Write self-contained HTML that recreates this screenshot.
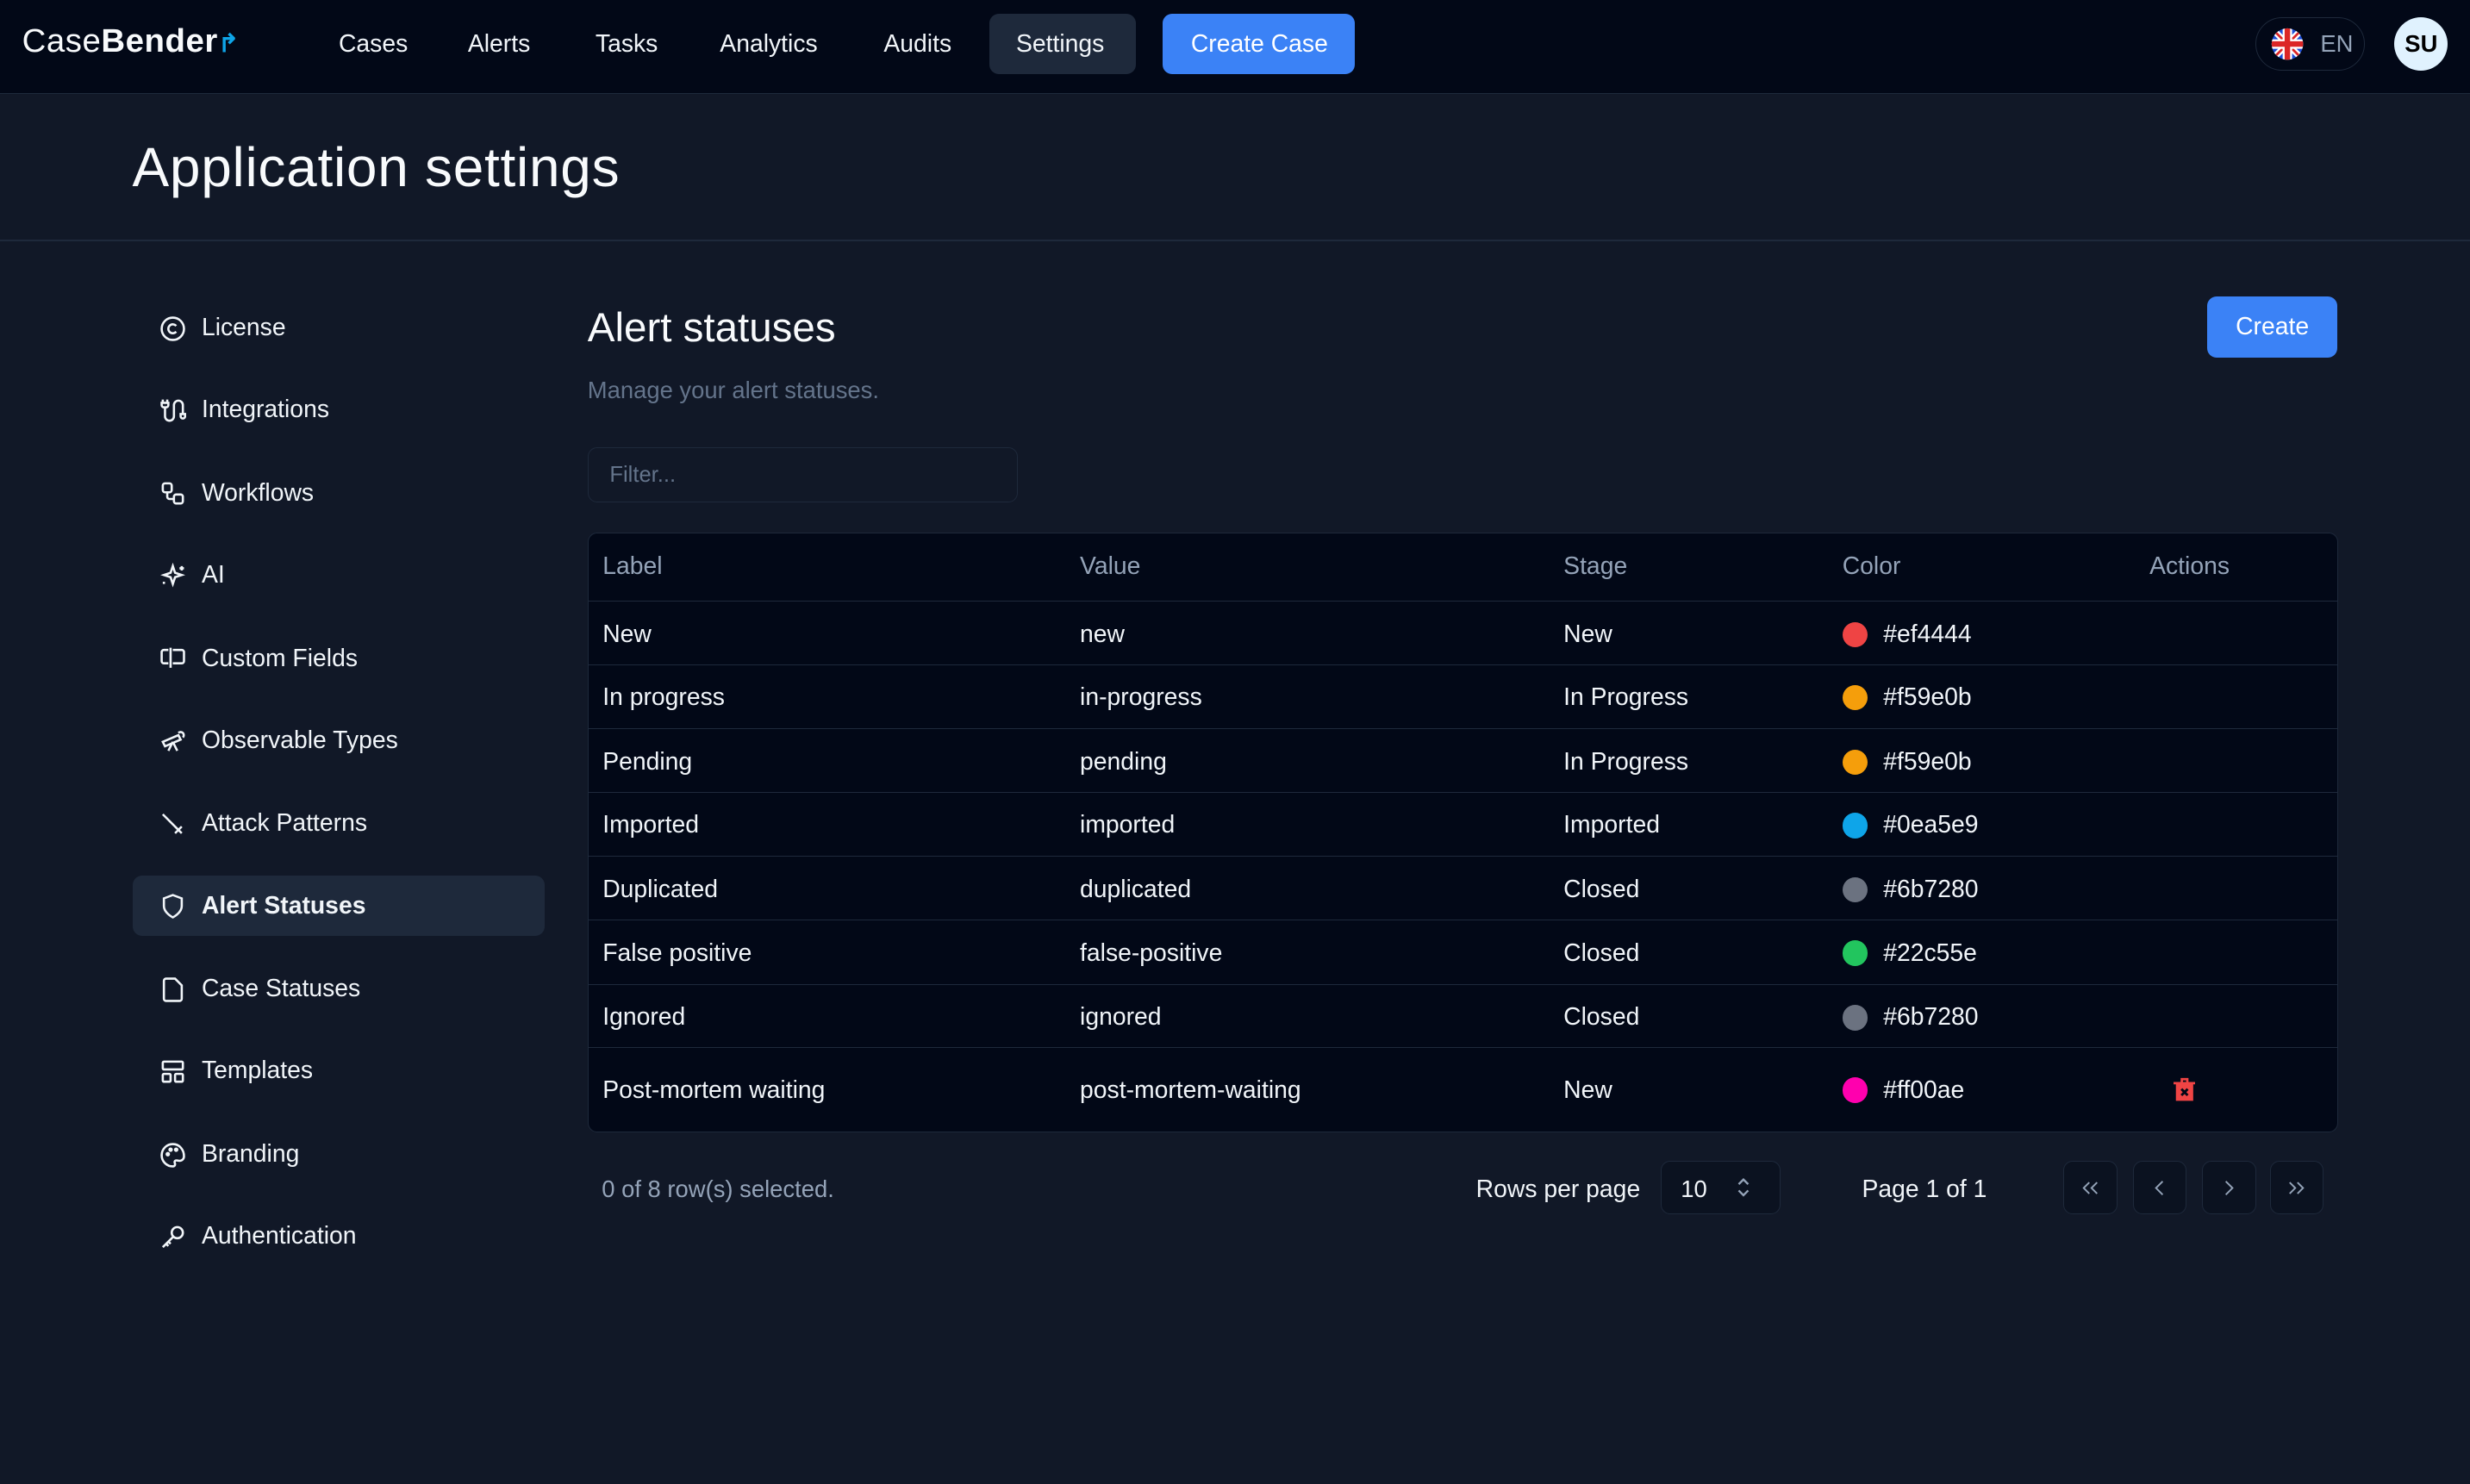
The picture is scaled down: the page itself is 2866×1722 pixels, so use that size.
<!DOCTYPE html>
<html><head><meta charset="utf-8"><style>
html,body{margin:0;padding:0;background:#111827;}
body{width:1568px;height:942px;zoom:1.82781;overflow:hidden;font-family:"Liberation Sans",sans-serif;color:#f8fafc;position:relative;}
.a{position:absolute;white-space:nowrap}
.hdr{position:absolute;left:0;top:0;width:1568px;height:59px;background:#020817;border-bottom:1px solid #1e293b}
.nav{font-size:15.5px;top:19px;color:#f1f5f9}
.side{left:84px;width:262px;height:38px;font-size:15.5px;color:#f1f5f9}
.side span{position:absolute;left:44px;top:10px}
.side svg{position:absolute;left:17px;top:11px}
.tbl{position:absolute;left:373px;top:338px;width:1110px;height:380px;background:#020817;border:1px solid #1e293b;border-radius:6px;overflow:hidden}
.row{position:absolute;left:0;width:1110px;border-top:1px solid #1e293b;font-size:15.5px;color:#f1f5f9}
.row div{position:absolute;top:12px}
.dot{width:16px;height:16px;border-radius:50%;top:13px!important}
.pb{position:absolute;top:737px;width:33px;height:33px;border:1px solid #1e293b;border-radius:6px;background:#0b1220}
.pb svg{position:absolute;left:8px;top:8px}
</style></head><body>
<div class="hdr"></div>
<div class="a" style="left:14px;top:14px;font-size:21px;color:#f8fafc;letter-spacing:0.3px">Case<b>Bender</b><span style="color:#0ea5e9;font-size:16px;font-weight:bold">↱</span></div>
<div class="a nav" style="left:215px">Cases</div>
<div class="a nav" style="left:297px">Alerts</div>
<div class="a nav" style="left:378px">Tasks</div>
<div class="a nav" style="left:457px">Analytics</div>
<div class="a nav" style="left:561px">Audits</div>
<div class="a" style="left:628px;top:9px;width:93px;height:38px;background:#1e293b;border-radius:6px"></div>
<div class="a nav" style="left:645px">Settings</div>
<div class="a" style="left:738px;top:9px;width:122px;height:38px;background:#3b82f6;border-radius:6px"></div>
<div class="a nav" style="left:756px;color:#fff">Create Case</div>
<div class="a" style="left:1432px;top:11px;width:68px;height:33px;border:1px solid #1e293b;border-radius:18px"></div>
<svg class="a" style="left:1441px;top:17px" width="22" height="22" viewBox="0 0 22 22"><defs><clipPath id="c"><circle cx="11" cy="11" r="10"/></clipPath></defs><g clip-path="url(#c)"><rect width="22" height="22" fill="#1d4ed8"/><path d="M0 0L22 22M22 0L0 22" stroke="#fff" stroke-width="4"/><path d="M0 0L22 22M22 0L0 22" stroke="#dc2626" stroke-width="1.5"/><path d="M11 0V22M0 11H22" stroke="#fff" stroke-width="6"/><path d="M11 0V22M0 11H22" stroke="#dc2626" stroke-width="3.5"/></g></svg>
<div class="a" style="left:1473px;top:19px;font-size:15px;color:#94a3b8">EN</div>
<div class="a" style="left:1520px;top:11px;width:34px;height:34px;border-radius:50%;background:#e0f2fe;color:#000;font-weight:bold;font-size:15px;text-align:center;line-height:34px">SU</div>

<div class="a" style="left:84px;top:86px;font-size:35px;letter-spacing:0.4px;color:#f8fafc">Application settings</div>
<div class="a" style="left:0;top:152px;width:1568px;height:1px;background:#1e293b"></div>

<div class="a side" style="top:189px"><svg width="17" height="17" viewBox="0 0 24 24" fill="none" stroke="#f1f5f9" stroke-width="2"><circle cx="12" cy="12" r="10"/><path d="M15 9.4a4 4 0 1 0 0 5.2"/></svg><span>License</span></div>
<div class="a side" style="top:241px"><svg width="17" height="17" viewBox="0 0 24 24" fill="none" stroke="#f1f5f9" stroke-width="2"><path d="M4 9a2 2 0 0 1-2-2V5h6v2a2 2 0 0 1-2 2zM3 5V2M7 5V2M5 9v8a4 4 0 0 0 8 0V7a4 4 0 0 1 8 0v8M19 15h4v2a2 2 0 0 1-4 0z"/></svg><span>Integrations</span></div>
<div class="a side" style="top:294px"><svg width="17" height="17" viewBox="0 0 24 24" fill="none" stroke="#f1f5f9" stroke-width="2"><rect x="3" y="3" width="8" height="8" rx="2"/><path d="M7 11v4a2 2 0 0 0 2 2h4"/><rect x="13" y="13" width="8" height="8" rx="2"/></svg><span>Workflows</span></div>
<div class="a side" style="top:346px"><svg width="17" height="17" viewBox="0 0 24 24" fill="none" stroke="#f1f5f9" stroke-width="2"><path d="M12 3l2 6 6 2-6 2-2 6-2-6-6-2 6-2z M20 3v4M22 5h-4M4 17v2"/></svg><span>AI</span></div>
<div class="a side" style="top:399px"><svg width="17" height="17" viewBox="0 0 24 24" fill="none" stroke="#f1f5f9" stroke-width="2"><path d="M12 4h8a2 2 0 0 1 2 2v8a2 2 0 0 1-2 2h-8M8 4H4a2 2 0 0 0-2 2v8a2 2 0 0 0 2 2h4M10 2v18"/></svg><span>Custom Fields</span></div>
<div class="a side" style="top:451px"><svg width="17" height="17" viewBox="0 0 24 24" fill="none" stroke="#f1f5f9" stroke-width="2"><path d="M3 13l14-6 2 4-14 6zM12 13l-4 8M12 13l4 8M17 5a2 2 0 1 1 4 4"/></svg><span>Observable Types</span></div>
<div class="a side" style="top:504px"><svg width="17" height="17" viewBox="0 0 24 24" fill="none" stroke="#f1f5f9" stroke-width="2"><path d="M3 3l15 15M14 20l6-6M16 16l4 4"/></svg><span>Attack Patterns</span></div>
<div class="a side" style="top:556px;background:#1e293b;border-radius:6px"><svg width="17" height="17" viewBox="0 0 24 24" fill="none" stroke="#f1f5f9" stroke-width="2"><path d="M12 22s8-4 8-10V5l-8-3-8 3v7c0 6 8 10 8 10z"/></svg><span style="font-weight:bold">Alert Statuses</span></div>
<div class="a side" style="top:609px"><svg width="17" height="17" viewBox="0 0 24 24" fill="none" stroke="#f1f5f9" stroke-width="2"><path d="M14 2H6a2 2 0 0 0-2 2v16a2 2 0 0 0 2 2h12a2 2 0 0 0 2-2V8z"/></svg><span>Case Statuses</span></div>
<div class="a side" style="top:661px"><svg width="17" height="17" viewBox="0 0 24 24" fill="none" stroke="#f1f5f9" stroke-width="2"><rect x="3" y="3" width="18" height="7" rx="1"/><rect x="3" y="14" width="7" height="7" rx="1"/><rect x="14" y="14" width="7" height="7" rx="1"/></svg><span>Templates</span></div>
<div class="a side" style="top:714px"><svg width="17" height="17" viewBox="0 0 24 24" fill="none" stroke="#f1f5f9" stroke-width="2"><path d="M12 2a10 10 0 0 0 0 20c1.5 0 2-1 2-2s-1-2 0-3 2 0 4 0a4 4 0 0 0 4-4c0-6-4-11-10-11z"/><circle cx="7.5" cy="11" r="1"/><circle cx="10" cy="7" r="1"/><circle cx="15" cy="7" r="1"/></svg><span>Branding</span></div>
<div class="a side" style="top:766px"><svg width="17" height="17" viewBox="0 0 24 24" fill="none" stroke="#f1f5f9" stroke-width="2"><circle cx="16" cy="8" r="5"/><path d="M12 12L3 21M6 18l2 2M8 16l2 2"/></svg><span>Authentication</span></div>

<div class="a" style="left:373px;top:193px;font-size:26px;color:#f8fafc">Alert statuses</div>
<div class="a" style="left:373px;top:239px;font-size:15px;color:#64748b">Manage your alert statuses.</div>
<div class="a" style="left:1401px;top:188px;width:83px;height:39px;background:#3b82f6;border-radius:6px;color:#fff;font-size:15.5px;text-align:center;line-height:39px">Create</div>
<div class="a" style="left:373px;top:284px;width:272px;height:34px;border:1px solid #1e293b;border-radius:6px;background:#111827"></div>
<div class="a" style="left:387px;top:294px;font-size:14px;color:#64748b">Filter...</div>

<div class="tbl">
<div class="row" style="top:0;height:43px;border-top:none;color:#94a3b8"><div style="left:9px">Label</div><div style="left:312px">Value</div><div style="left:619px">Stage</div><div style="left:796px">Color</div><div style="left:991px">Actions</div></div>
<div class="row" style="top:43px;height:40px"><div style="left:9px">New</div><div style="left:312px">new</div><div style="left:619px">New</div><div class="dot" style="left:796px;background:#ef4444"></div><div style="left:822px">#ef4444</div></div>
<div class="row" style="top:83px;height:40px"><div style="left:9px">In progress</div><div style="left:312px">in-progress</div><div style="left:619px">In Progress</div><div class="dot" style="left:796px;background:#f59e0b"></div><div style="left:822px">#f59e0b</div></div>
<div class="row" style="top:124px;height:40px"><div style="left:9px">Pending</div><div style="left:312px">pending</div><div style="left:619px">In Progress</div><div class="dot" style="left:796px;background:#f59e0b"></div><div style="left:822px">#f59e0b</div></div>
<div class="row" style="top:164px;height:40px"><div style="left:9px">Imported</div><div style="left:312px">imported</div><div style="left:619px">Imported</div><div class="dot" style="left:796px;background:#0ea5e9"></div><div style="left:822px">#0ea5e9</div></div>
<div class="row" style="top:205px;height:40px"><div style="left:9px">Duplicated</div><div style="left:312px">duplicated</div><div style="left:619px">Closed</div><div class="dot" style="left:796px;background:#6b7280"></div><div style="left:822px">#6b7280</div></div>
<div class="row" style="top:245px;height:40px"><div style="left:9px">False positive</div><div style="left:312px">false-positive</div><div style="left:619px">Closed</div><div class="dot" style="left:796px;background:#22c55e"></div><div style="left:822px">#22c55e</div></div>
<div class="row" style="top:286px;height:40px"><div style="left:9px">Ignored</div><div style="left:312px">ignored</div><div style="left:619px">Closed</div><div class="dot" style="left:796px;background:#6b7280"></div><div style="left:822px">#6b7280</div></div>
<div class="row" style="top:326px;height:54px"><div style="left:9px;top:18px">Post-mortem waiting</div><div style="left:312px;top:18px">post-mortem-waiting</div><div style="left:619px;top:18px">New</div><div class="dot" style="left:796px;background:#ff00ae;top:19px!important"></div><div style="left:822px;top:18px">#ff00ae</div>
<svg style="position:absolute;left:1006px;top:19px" width="14" height="15" viewBox="0 0 14 15"><path d="M0 3h14v1.5H0zM4.5 0.5h5v3h-1.5v-1.5h-2v1.5h-1.5zM1.5 4.5h11V15h-11z" fill="#ef4444"/><path d="M5 7.5l4 4M9 7.5l-4 4" stroke="#020817" stroke-width="1.6"/></svg></div>
</div>

<div class="a" style="left:382px;top:746px;font-size:15px;color:#94a3b8">0 of 8 row(s) selected.</div>
<div class="a" style="left:937px;top:746px;font-size:15.5px;color:#f1f5f9">Rows per page</div>
<div class="a" style="left:1054px;top:737px;width:75px;height:33px;border:1px solid #1e293b;border-radius:6px;background:#0b1220"></div>
<div class="a" style="left:1067px;top:746px;font-size:15px;color:#f1f5f9">10</div>
<svg class="a" style="left:1101px;top:747px" width="12" height="14" viewBox="0 0 12 14" fill="none" stroke="#94a3b8" stroke-width="1.3"><path d="M3 5l3-3 3 3M3 9l3 3 3-3"/></svg>
<div class="a" style="left:1182px;top:746px;font-size:15.5px;color:#f1f5f9">Page 1 of 1</div>
<div class="pb" style="left:1310px"><svg width="17" height="17" viewBox="0 0 24 24" fill="none" stroke="#94a3b8" stroke-width="1.5"><path d="M11 17l-5-5 5-5M18 17l-5-5 5-5"/></svg></div>
<div class="pb" style="left:1354px"><svg width="17" height="17" viewBox="0 0 24 24" fill="none" stroke="#94a3b8" stroke-width="1.5"><path d="M15 18l-6-6 6-6"/></svg></div>
<div class="pb" style="left:1398px"><svg width="17" height="17" viewBox="0 0 24 24" fill="none" stroke="#94a3b8" stroke-width="1.5"><path d="M9 18l6-6-6-6"/></svg></div>
<div class="pb" style="left:1441px"><svg width="17" height="17" viewBox="0 0 24 24" fill="none" stroke="#94a3b8" stroke-width="1.5"><path d="M6 17l5-5-5-5M13 17l5-5-5-5"/></svg></div>
</body></html>
